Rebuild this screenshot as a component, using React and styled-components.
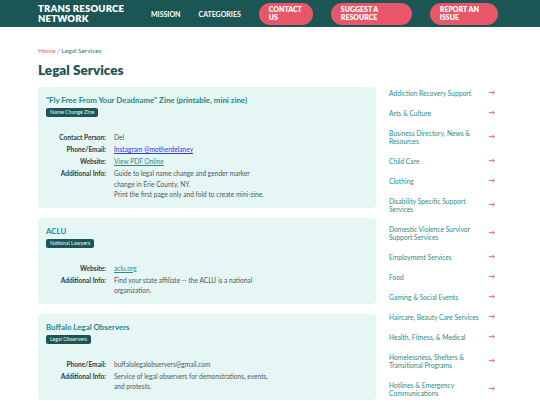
import React from 'react'
import styled, { createGlobalStyle } from 'styled-components';

const GlobalStyle = createGlobalStyle`
  body {
    margin: 0;
    font-family: Lato, "Open Sans", sans-serif;
    background: #ffffff;
  }
`

const Header = styled.header`
  height: 27px;
  background-color: #1b5654;
  display: flex;
  align-items: center;
  padding: 0 0 0 38px;
`
const Logo = styled.div`
  color: white;
  font-weight: 800;
  font-size: 9.5px;
  line-height: 10px;
  letter-spacing: .2px;
  width: 113px;
`
const Nav = styled.nav`
  display: flex;
  align-items: center;
  gap: 18px;
`
const NavLink = styled.a`
  color: white;
  font-size: 7px;
  font-weight: 700;
  text-transform: uppercase;
`
const PinkButton = styled.a`
  display: flex;
  align-items: center;
  box-sizing: border-box;
  width: ${props => props.w}px;
  height: 22px;
  padding: 0 10px;
  background-color: #e8566a;
  border-radius: 11px;
  color: white;
  font-size: 7px;
  line-height: 7.5px;
  font-weight: 800;
  text-transform: uppercase;
`

const Page = styled.div`
  padding: 18px 0 0 38px;
  width: 462px;
`
const Crumbs = styled.div`
  font-size: 6.5px;
  line-height: 12px;
  color: #2e7a77;
  a { color: #e8566a; }
`
const Title = styled.h1`
  margin: 4px 0 0;
  font-size: 13.5px;
  line-height: 18px;
  font-weight: 800;
  color: #1d5654;
`
const Layout = styled.div`
  display: grid;
  grid-template-columns: 338px 111px;
  gap: 13px;
`
const Cards = styled.div`
  display: flex;
  flex-direction: column;
  gap: 10px;
  padding-top: 8px;
`
const Card = styled.section`
  background-color: #e6f6f4;
  border-radius: 4px;
  padding: 7px 8px 8px;
`
const CardTitle = styled.h2`
  margin: 0;
  font-size: 7.9px;
  line-height: 12px;
  font-weight: 700;
  color: #278784;
`
const Badge = styled.span`
  display: block;
  width: fit-content;
  margin-top: 2px;
  background-color: #1b5654;
  color: #e6f6f4;
  font-size: 5.3px;
  line-height: 9px;
  padding: 0 4px;
  border-radius: 2px;
`
const Details = styled.dl`
  margin: 15px 0 0;
  display: grid;
  grid-template-columns: 60px 200px;
  column-gap: 8px;
  row-gap: 1.5px;
  font-size: 6.6px;
  line-height: 10.5px;
`
const Label = styled.dt`
  text-align: right;
  font-weight: 700;
  color: #2f3d3c;
`
const Value = styled.dd`
  margin: 0;
  color: #4b5a59;
  a { color: ${props => props.blue ? '#3537d4' : '#2b8a86'}; text-decoration: underline; }
`

const Sidebar = styled.ul`
  list-style: none;
  margin: 0;
  padding: 4px 0 0;
`
const Category = styled.li`
  display: flex;
  align-items: center;
  justify-content: space-between;
  padding: 6px 0;
  font-size: 6.7px;
  line-height: 8px;
  color: #2e8c88;
  span { max-width: 95px; }
`
const Arrow = styled.b`
  color: #e8566a;
  font-weight: 700;
  font-size: 6.5px;
  padding-right: 5px;
`

const resources = [
  {
    title: '"Fly Free From Your Deadname" Zine (printable, mini zine)',
    tag: 'Name Change Zine',
    rows: [
      ['Contact Person:', 'Del'],
      ['Phone/Email:', <a href="#">Instagram @motherdelaney</a>, true],
      ['Website:', <a href="#">View PDF Online</a>],
      ['Additional Info:', <>Guide to legal name change and gender marker<br />change in Erie County, NY.<br />Print the first page only and fold to create mini-zine.</>],
    ],
  },
  {
    title: 'ACLU',
    tag: 'National Lawyers',
    rows: [
      ['Website:', <a href="#">aclu.org</a>],
      ['Additional Info:', <>Find your state affiliate -- the ACLU is a national<br />organization.</>],
    ],
  },
  {
    title: 'Buffalo Legal Observers',
    tag: 'Legal Observers',
    rows: [
      ['Phone/Email:', 'buffalolegalobservers@gmail.com'],
      ['Additional Info:', <>Service of legal observers for demonstrations, events,<br />and protests.</>],
    ],
  },
]

const categories = [
  'Addiction Recovery Support',
  'Arts & Culture',
  'Business Directory, News & Resources',
  'Child Care',
  'Clothing',
  'Disability Specific Support Services',
  'Domestic Violence Survivor Support Services',
  'Employment Services',
  'Food',
  'Gaming & Social Events',
  'Haircare, Beauty Care Services',
  'Health, Fitness, & Medical',
  'Homelessness, Shelters & Transitional Programs',
  'Hotlines & Emergency Communications',
]

const App = () => {
  return (
    <>
      <GlobalStyle />
      <Header>
        <Logo>TRANS RESOURCE<br />NETWORK</Logo>
        <Nav>
          <NavLink>Mission</NavLink>
          <NavLink>Categories</NavLink>
          <PinkButton w={54}>Contact<br />Us</PinkButton>
          <PinkButton w={81}>Suggest a<br />Resource</PinkButton>
          <PinkButton w={68}>Report an<br />Issue</PinkButton>
        </Nav>
      </Header>
      <Page>
        <Crumbs><a>Home</a> / Legal Services</Crumbs>
        <Title>Legal Services</Title>
        <Layout>
          <Cards>
            {resources.map(r => (
              <Card key={r.title}>
                <CardTitle>{r.title}</CardTitle>
                <Badge>{r.tag}</Badge>
                <Details>
                  {r.rows.map(([label, value, blue]) => (
                    <React.Fragment key={label}>
                      <Label>{label}</Label>
                      <Value blue={blue}>{value}</Value>
                    </React.Fragment>
                  ))}
                </Details>
              </Card>
            ))}
          </Cards>
          <Sidebar>
            {categories.map(c => (
              <Category key={c}>
                <span>{c}</span>
                <Arrow>→</Arrow>
              </Category>
            ))}
          </Sidebar>
        </Layout>
      </Page>
    </>
  )
}

export default App
